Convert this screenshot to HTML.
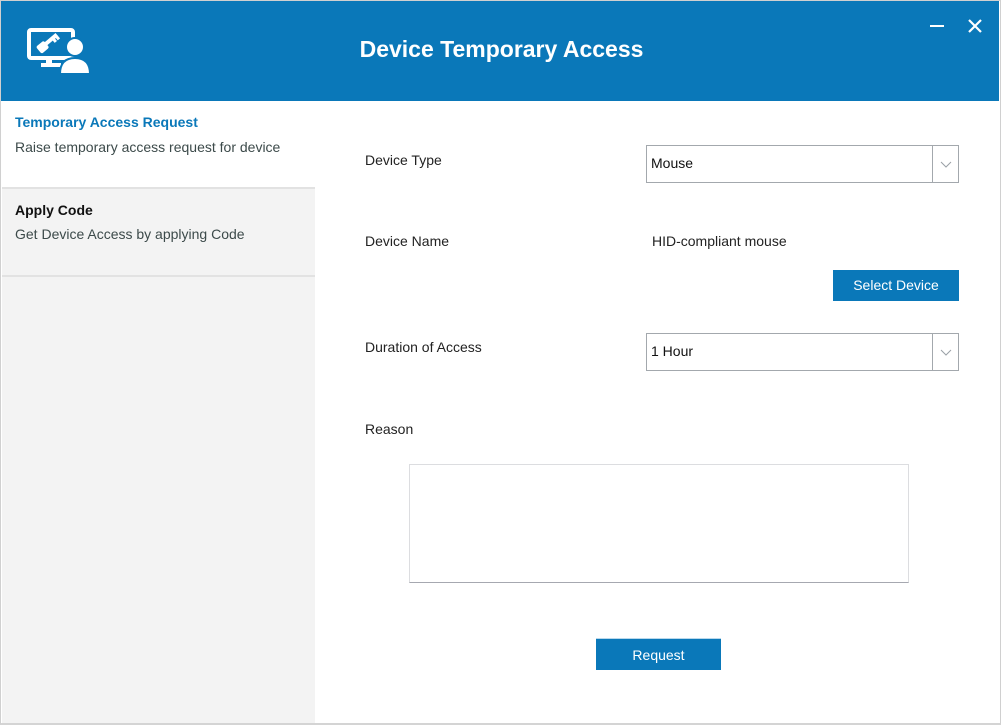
<!DOCTYPE html>
<html><head><style>
*{margin:0;padding:0;box-sizing:border-box}
body{width:1001px;height:728px;background:#fff;font-family:"Liberation Sans",sans-serif;position:relative;overflow:hidden}
.win{position:absolute;left:0;top:0;width:1001px;height:725px;border:1px solid #d0d0d0;border-bottom:2px solid #d4d4d4}
.hdr{position:absolute;left:1px;top:1px;width:998px;height:100px;background:#0a78b9}
.title{position:absolute;left:0;width:1001px;top:36px;text-align:center;color:#fff;font-size:23px;font-weight:bold}
.side{position:absolute;left:2px;top:101px;width:313px;height:622px;background:#f3f3f3}
.item{position:absolute;left:0;width:313px;border-bottom:2px solid #e2e2e2}
.t{position:absolute;left:13px;font-size:14px;font-weight:bold}
.s{position:absolute;left:13px;font-size:14px;color:#3c4a4a}
.lbl{position:absolute;left:365px;font-size:14px;color:#222}
.sel{position:absolute;left:646px;width:313px;height:38px;border:1px solid #a3a8ad;background:#fff;font-size:14px;color:#111}
.sel span{position:absolute;left:4px;top:9px}
.sel i{position:absolute;right:0;top:0;width:26px;height:36px;border-left:1px solid #a3a8ad}
.btn{position:absolute;background:#0a78b9;color:#fff;font-size:14px;text-align:center}
</style></head><body>
<div class="win"></div>
<div class="hdr">
<svg style="position:absolute;left:25px;top:26px" width="64" height="47" viewBox="0 0 64 47">
<rect x="3" y="3" width="44" height="28" rx="2" fill="none" stroke="#fff" stroke-width="4"/>
<rect x="20" y="31" width="6" height="6" fill="#fff"/>
<rect x="15" y="36" width="20" height="4" fill="#fff"/>
<g transform="rotate(-40 20 18)" fill="#fff"><rect x="11" y="13" width="10" height="9" rx="2"/><rect x="20" y="15" width="15" height="4"/><rect x="28" y="18" width="3" height="4"/><rect x="32" y="18" width="3" height="4"/></g>
<circle cx="49" cy="20" r="9" fill="#fff" stroke="#0a78b9" stroke-width="2"/>
<path d="M34 47 Q34 31 49 31 Q64 31 64 47 Z" fill="#fff" stroke="#0a78b9" stroke-width="2"/>
</svg>
<div class="title" style="top:35px">Device Temporary Access</div>
<div style="position:absolute;left:929px;top:24px;width:14px;height:2px;background:#fff"></div>
<svg style="position:absolute;left:967px;top:18px" width="14" height="14"><path d="M1 1L13 13M13 1L1 13" stroke="#fff" stroke-width="2.2"/></svg>
</div>
<div class="side">
<div class="item" style="top:0;height:88px;background:#fff"><div class="t" style="top:13px;color:#0a78b9">Temporary Access Request</div><div class="s" style="top:38px">Raise temporary access request for device</div></div>
<div class="item" style="top:88px;height:88px"><div class="t" style="top:13px;color:#111">Apply Code</div><div class="s" style="top:37px">Get Device Access by applying Code</div></div>
</div>
<div class="lbl" style="top:152px">Device Type</div>
<div class="sel" style="top:145px"><span>Mouse</span><i><svg width="26" height="36"><path d="M8 16l5 5 5-5" fill="none" stroke="#9aa0a6" stroke-width="1"/></svg></i></div>
<div class="lbl" style="top:233px">Device Name</div>
<div class="lbl" style="top:233px;left:652px">HID-compliant mouse</div>
<div class="btn" style="left:833px;top:270px;width:126px;height:31px;line-height:30px">Select Device</div>
<div class="lbl" style="top:339px">Duration of Access</div>
<div class="sel" style="top:333px"><span>1 Hour</span><i><svg width="26" height="36"><path d="M8 16l5 5 5-5" fill="none" stroke="#9aa0a6" stroke-width="1"/></svg></i></div>
<div class="lbl" style="top:421px">Reason</div>
<div style="position:absolute;left:409px;top:464px;width:500px;height:119px;border:1px solid #dcdde0;border-bottom:1px solid #a6a8b0"></div>
<div class="btn" style="left:596px;top:638px;width:125px;height:32px;line-height:32px;border-top:1px solid #b8d8ec">Request</div>
</body></html>
